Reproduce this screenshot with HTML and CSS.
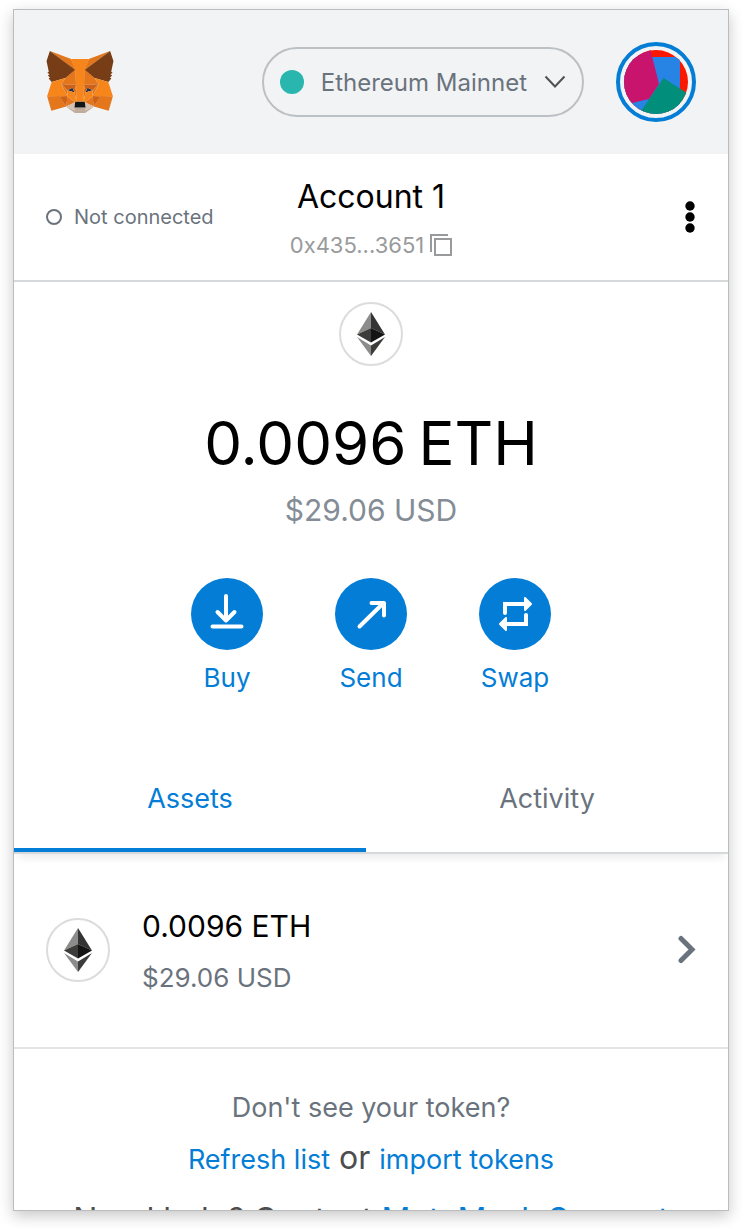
FILE: index.html
```html
<!DOCTYPE html>
<html lang="en">
<head>
<meta charset="utf-8">
<meta name="viewport" content="width=device-width, initial-scale=1">
<title>MetaMask</title>
<link rel="stylesheet" href="styles.css">
</head>
<body>
<svg width="0" height="0" class="sprite" aria-hidden="true">
  <symbol id="eth" viewBox="0 0 28 44">
    <path fill="#8c8c8c" d="M14 0 0 22.500 14 16z"/>
    <path fill="#343434" d="M14 0 28 22.500 14 16z"/>
    <path fill="#3c3c3b" d="M0 22.500 14 16v14.500z"/>
    <path fill="#141414" d="M28 22.500 14 16v14.500z"/>
    <path fill="#8c8c8c" d="M0 25 14 33.500V44z"/>
    <path fill="#3c3c3b" d="M28 25 14 33.500V44z"/>
  </symbol>
</svg>
<div class="popup">
  <header class="header">
    <svg class="fox" viewBox="31.800 35.500 255 236.400" role="img" aria-label="MetaMask">
      <path fill="#e2761b" d="M274.100 35.500 174.600 109.400 193 65.800z"/>
      <path fill="#e4761b" d="M44.400 35.500 143.100 110.100 125.600 65.800zM238.300 206.800 211.800 247.400 268.500 263 284.800 207.700zM33.900 207.700 50.100 263 106.800 247.400 80.300 206.800zM103.600 138.200 87.800 162.100 144.100 164.600 142.100 104.100zM214.900 138.200 175.900 103.400 174.600 164.600 230.800 162.100zM106.800 247.400 140.600 230.900 111.400 208.100zM177.900 230.900 211.800 247.400 207.100 208.100z"/>
      <path fill="#d7c1b3" d="M211.800 247.400 177.900 230.900 180.600 253 180.300 262.300zM106.800 247.400 138.300 262.300 138.100 253 140.600 230.900z"/>
      <path fill="#233447" d="M138.800 193.500 110.600 185.200 130.500 176.100zM179.700 193.500 188 176.100 208 185.200z"/>
      <path fill="#cd6116" d="M106.800 247.400 111.600 206.800 80.300 207.700zM207 206.800 211.800 247.400 238.300 207.700zM230.800 162.100 174.600 164.600 179.800 193.500 188.100 176.100 208.100 185.200zM110.600 185.200 130.600 176.100 138.800 193.500 144.100 164.600 87.800 162.100z"/>
      <path fill="#e4751f" d="M87.800 162.100 111.400 208.100 110.600 185.200zM208.100 185.200 207.100 208.100 230.800 162.100zM144.100 164.600 138.800 193.500 145.400 227.600 146.900 182.700zM174.600 164.600 171.900 182.600 173.100 227.600 179.800 193.500z"/>
      <path fill="#f6851b" d="M179.800 193.500 173.100 227.600 177.900 230.900 207.100 208.100 208.100 185.200zM110.600 185.200 111.400 208.100 140.600 230.900 145.400 227.600 138.800 193.500z"/>
      <path fill="#c0ad9e" d="M180.300 262.300 180.600 253 178.100 250.800H140.400L138.100 253 138.300 262.300 106.800 247.400 117.800 256.400 140.100 271.900H178.400L200.800 256.400 211.800 247.400z"/>
      <path fill="#161616" d="M177.900 230.900 173.100 227.600H145.400L140.600 230.900 138.100 253 140.400 250.800H178.100L180.600 253z"/>
      <path fill="#763d16" d="M278.300 114.200 286.800 73.400 274.100 35.500 177.900 106.900 214.900 138.200 267.200 153.500 278.800 140 273.800 136.400 281.800 129.100 275.600 124.300 283.600 118.200zM31.800 73.400 40.300 114.200 34.900 118.200 42.900 124.300 36.800 129.100 44.800 136.400 39.800 140 51.300 153.500 103.600 138.200 140.600 106.900 44.400 35.500z"/>
      <path fill="#f6851b" d="M267.200 153.500 214.900 138.200 230.800 162.100 207.100 208.100H238.300L284.800 207.700zM103.600 138.200 51.300 153.500 33.900 207.700H80.300L111.400 208.100 87.800 162.100zM174.600 164.600 177.900 106.900 193.100 65.800H125.600L140.600 106.900 144.100 164.600 145.300 182.800 145.400 227.600H173.100L173.300 182.800z"/>
    </svg>
    <button class="network" type="button">
      <span class="network-dot"></span>
      <span class="network-name">Ethereum Mainnet</span>
      <svg class="network-caret" viewBox="0 0 22 14" aria-hidden="true"><path d="M1.500 1.500 11 11.500l9.500-10" fill="none" stroke="#4d5156" stroke-width="2"/></svg>
    </button>
    <button class="avatar" type="button" aria-label="Accounts">
      <svg viewBox="0 0 64 64" aria-hidden="true">
        <clipPath id="disc"><circle cx="32" cy="32" r="32"/></clipPath>
        <g clip-path="url(#disc)">
          <path fill="#fb1801" d="M0 0h64v64H0z"/>
          <path fill="#2784e5" d="M0 7h56v57H0z"/>
          <path fill="#c8146c" d="M0 0h26.500L35 34 25 49 8 53 0 55z"/>
          <path fill="#018e7b" d="M39.500 28 66 45v19H15z"/>
        </g>
      </svg>
    </button>
  </header>

  <section class="account">
    <div class="status"><span class="status-ring"></span>Not connected</div>
    <button class="account-id" type="button">
      <span class="account-name">Account 1</span>
      <span class="account-address">0x435...3651
        <svg viewBox="0 0 22 22" aria-hidden="true"><path d="M1 18V1h17M5 5h16v16H5z" fill="none" stroke="#989a9b" stroke-width="2"/></svg>
      </span>
    </button>
    <button class="menu" type="button" aria-label="Account options">
      <svg viewBox="0 0 10 32" aria-hidden="true"><circle cx="5" cy="5" r="4.700"/><circle cx="5" cy="16" r="4.700"/><circle cx="5" cy="27" r="4.700"/></svg>
    </button>
  </section>

  <main>
    <section class="balance">
      <span class="token"><svg aria-hidden="true"><use href="#eth"/></svg></span>
      <h1 class="balance-main"><span>0.0096</span><span>ETH</span></h1>
      <p class="balance-fiat">$29.06 USD</p>
      <div class="actions">
        <button class="action" type="button">
          <svg viewBox="0 0 72 72" aria-hidden="true"><path d="M35 18v24M26.500 34l8.500 8.500 8.500-8.500M21.500 48.500h29"/></svg>
          <span>Buy</span>
        </button>
        <button class="action" type="button">
          <svg viewBox="0 0 72 72" aria-hidden="true"><path d="M24.500 48.500 48.500 25M36.500 25h12.500v12.500"/></svg>
          <span>Send</span>
        </button>
        <button class="action" type="button">
          <svg viewBox="0 0 72 72" aria-hidden="true"><path class="swap-line" d="M26 35v-9h20M47 37v9H27"/><path class="swap-head" d="M46 20v12l6-6zM27 40v12l-6-6z"/></svg>
          <span>Swap</span>
        </button>
      </div>
    </section>

    <nav class="tabs">
      <button class="tab tab-active" type="button">Assets</button>
      <button class="tab" type="button">Activity</button>
    </nav>

    <button class="asset" type="button">
      <span class="token"><svg aria-hidden="true"><use href="#eth"/></svg></span>
      <span class="asset-text">
        <span class="asset-amount">0.0096 ETH</span>
        <span class="asset-fiat">$29.06 USD</span>
      </span>
      <svg class="asset-arrow" viewBox="0 0 18 30" aria-hidden="true"><path d="m3 3.500 11 11-11 11" fill="none" stroke="#6a737d" stroke-width="5" stroke-linecap="round"/></svg>
    </button>

    <footer class="footer">
      <p class="hint">Don't see your token?</p>
      <p class="links"><a href="#refresh">Refresh list</a> or <a href="#import">import tokens</a></p>
      <p class="help">Need help? Contact <a href="#support">MetaMask Support</a></p>
    </footer>
  </main>
</div>
</body>
</html>
```
FILE: styles.css
```css
* { box-sizing: border-box; }

body {
  margin: 0;
  height: 100vh;
  padding: 9px 13px 17px;
  background: #fff;
  color: #000;
  font-family: Inter, "Liberation Sans", sans-serif;
}

p, h1 { margin: 0; font-weight: 400; }

button {
  padding: 0;
  border: 0;
  background: none;
  color: inherit;
  font: inherit;
  cursor: pointer;
}

svg { display: block; flex: none; }

a { color: #037dd6; text-decoration: none; }

.sprite { position: absolute; }

.popup {
  height: 100%;
  overflow: hidden;
  border: 1px solid #babcbe;
  background: #fff;
  box-shadow: 0 5px 14px rgba(0, 0, 0, 0.22);
}

.header {
  display: flex;
  align-items: center;
  height: 144px;
  padding: 0 32px;
  background: #f2f3f4;
}

.fox { width: 68px; height: 62px; }

.network {
  display: flex;
  align-items: center;
  height: 70px;
  margin: 0 32px 0 auto;
  padding: 0 16px;
  border: 2px solid #bbc0c5;
  border-radius: 35px;
}

.network-dot {
  width: 24px;
  height: 24px;
  border-radius: 50%;
  background: #29b6af;
}

.network-name {
  margin: 0 17px;
  color: #6a737d;
  font-size: 24px;
}

.network-caret { width: 22px; height: 14px; }

.avatar {
  padding: 4px;
  border: 4px solid #037dd6;
  border-radius: 50%;
}

.avatar svg { width: 64px; height: 64px; }

.account {
  display: grid;
  grid-template-columns: 1fr auto 1fr;
  align-items: center;
  height: 128px;
  padding: 0 32px;
  border-bottom: 2px solid #d6d9dc;
}

.status {
  display: flex;
  align-items: center;
  gap: 12px;
  color: #6a737d;
  font-size: 20px;
}

.status-ring {
  width: 16px;
  height: 16px;
  border: 2px solid #6a737d;
  border-radius: 50%;
}

.account-id {
  display: grid;
  justify-items: center;
  padding-top: 7px;
}

.account-name { font-size: 32px; line-height: 48px; }

.account-address {
  display: flex;
  align-items: center;
  gap: 6px;
  color: #989a9b;
  font-size: 22px;
  line-height: 48px;
}

.account-address svg { width: 22px; height: 22px; }

.menu { justify-self: end; }

.menu svg { width: 12px; height: 32px; }

.token {
  display: grid;
  place-items: center;
  flex: none;
  width: 64px;
  height: 64px;
  border: 2px solid #dcdcdc;
  border-radius: 50%;
}

.token svg { width: 28px; height: 44px; }

.balance {
  display: flex;
  flex-direction: column;
  align-items: center;
  padding-top: 20px;
}

.balance-main {
  display: flex;
  gap: 12px;
  margin-top: 32px;
  font-size: 60px;
  line-height: 90px;
}

.balance-fiat {
  color: #848c96;
  font-size: 30px;
  line-height: 44px;
}

.actions {
  display: flex;
  margin-top: 46px;
}

.action {
  display: grid;
  justify-items: center;
  width: 144px;
  color: #037dd6;
  font-size: 26px;
  line-height: 40px;
}

.action svg {
  width: 72px;
  height: 72px;
  margin-bottom: 8px;
  border-radius: 50%;
  background: #037dd6;
  fill: none;
  stroke: #fff;
  stroke-width: 4;
  stroke-linecap: round;
  stroke-linejoin: round;
}

.action .swap-line { stroke-linejoin: miter; }

.action .swap-head { fill: #fff; stroke-width: 2; }

.tabs {
  display: flex;
  height: 108px;
  margin-top: 48px;
  border-bottom: 2px solid #d6d9dc;
  box-shadow: 0 8px 8px -4px rgba(0, 0, 0, 0.08);
}

.tab {
  flex: 1 1 auto;
  padding-top: 2px;
  border-bottom: 4px solid transparent;
  color: #6a737d;
  font-size: 27px;
}

.tab-active { border-color: #037dd6; color: #037dd6; }

.asset {
  display: flex;
  align-items: center;
  gap: 32px;
  width: 100%;
  height: 195px;
  padding: 0 32px 2px;
  border-bottom: 2px solid #e2e4e6;
  text-align: left;
}

.asset-text {
  display: grid;
  flex: 1;
  padding-top: 4px;
  line-height: 52px;
}

.asset-amount { font-size: 30px; }

.asset-fiat { color: #6a737d; font-size: 26px; }

.asset-arrow { width: 18px; height: 30px; }

.footer {
  padding-top: 34px;
  color: #4d4d4d;
  font-size: 32px;
  line-height: 50px;
  text-align: center;
}

.hint { color: #6a737d; font-size: 27px; }

.links a { font-size: 27px; }

.help { margin-top: 10px; white-space: nowrap; }
```
